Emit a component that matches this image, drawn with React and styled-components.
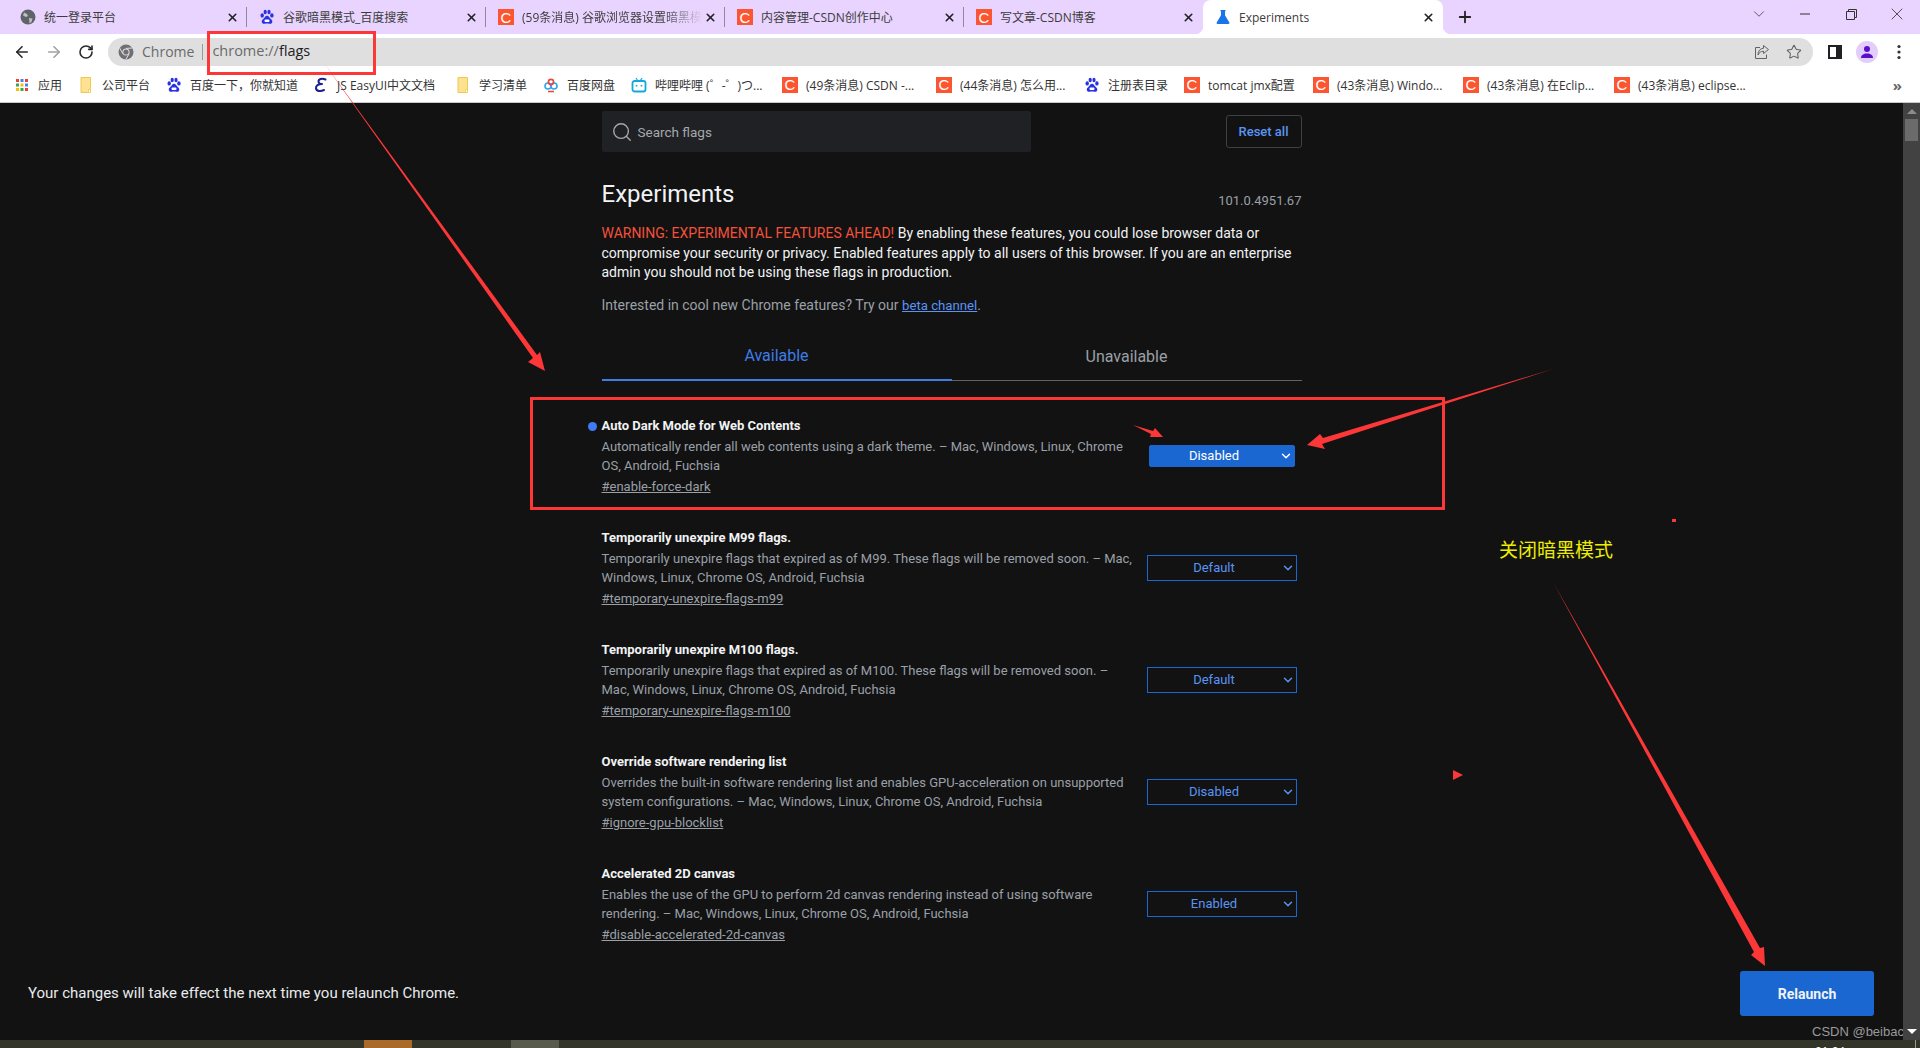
import React from "react";
import styled, { createGlobalStyle } from "styled-components";
import { ArrowLeft, ArrowRight, ChevronDown, Plus, RotateCw, Search, Star, X } from "lucide-react";

const uiFont = `"Open Sans", "Noto Sans CJK SC", sans-serif`;
const pageFont = `Roboto, "Liberation Sans", sans-serif`;

const GlobalStyle = createGlobalStyle`
  html, body {
    margin: 0;
    height: 100%;
    overflow: hidden;
    background: #121213;
  }
  * {
    box-sizing: border-box;
  }
`;

const Screen = styled.div`
  position: relative;
  width: 1920px;
  height: 1048px;
  display: flex;
  flex-direction: column;
  overflow: hidden;
  font-family: ${uiFont};
`;

const TabStrip = styled.div`
  height: 34px;
  flex: none;
  display: flex;
  background: #e8d4fe;
`;

const Tab = styled.div`
  position: relative;
  width: 239px;
  flex: none;
  display: flex;
  align-items: center;
  padding: 0 7px 0 11px;
  font-size: 12px;
  color: #3c3c3c;
  &::after {
    content: "";
    position: absolute;
    right: 0;
    top: 7px;
    bottom: 7px;
    width: 1px;
    background: ${(props) => (props.$divider ? "#8f8a96" : "transparent")};
  }
`;

const FirstTab = styled(Tab)`
  width: 247px;
  padding-left: 19px;
`;

const ActiveTab = styled(Tab)`
  width: 240px;
  background: #fff;
  border-radius: 8px 8px 0 0;
  &::before,
  &::after {
    content: "";
    position: absolute;
    top: auto;
    bottom: 0;
    width: 8px;
    height: 8px;
  }
  &::before {
    left: -8px;
    background: radial-gradient(circle at 0 0, transparent 8px, #fff 8.5px);
  }
  &::after {
    right: -8px;
    background: radial-gradient(circle at 100% 0, transparent 8px, #fff 8.5px);
  }
`;

const TabIcon = styled.span`
  width: 16px;
  height: 16px;
  flex: none;
  display: flex;
  margin-right: 8px;
  margin-left: 1px;
`;

const TabTitle = styled.span`
  flex: 1;
  min-width: 0;
  white-space: nowrap;
  overflow: hidden;
  ${(props) =>
    props.$fade &&
    `mask-image: linear-gradient(to right, #000 78%, transparent 100%);`}
`;

const TabClose = styled.span`
  width: 16px;
  display: flex;
  justify-content: center;
  color: #222;
`;

const NewTab = styled.div`
  width: 44px;
  display: flex;
  align-items: center;
  justify-content: center;
  color: #222;
`;

const WindowControls = styled.div`
  margin-left: auto;
  display: flex;
`;

const WindowButton = styled.div`
  width: 46px;
  height: 28px;
  display: flex;
  align-items: center;
  justify-content: center;
  color: #333;
`;

const Toolbar = styled.div`
  height: 34px;
  flex: none;
  display: flex;
  align-items: center;
  padding: 2px 5px 0 6px;
  background: #fff;
`;

const NavButton = styled.div`
  width: 32px;
  height: 28px;
  flex: none;
  display: flex;
  align-items: center;
  justify-content: center;
  color: ${(props) => (props.$dim ? "#a2a2a2" : "#2a2a2a")};
`;

const Omnibox = styled.div`
  flex: 1;
  height: 28px;
  margin: 0 6px;
  padding: 0 3px 0 10px;
  border-radius: 14px;
  background: #dfdfdf;
  display: flex;
  align-items: center;
  font-size: 14px;
  color: #6a6a6a;
`;

const OriginLabel = styled.span`
  margin-left: 8px;
  padding-right: 8px;
  border-right: 1px solid #9a9a9a;
  line-height: 16px;
`;

const Url = styled.span`
  margin-left: 9px;
  font-size: 14.5px;
  line-height: 18px;
  margin-top: -2px;
  b {
    font-weight: 400;
    color: #202124;
  }
`;

const OmniActions = styled.div`
  margin-left: auto;
  display: flex;
  color: #5f6368;
`;

const OmniAction = styled.div`
  width: 32px;
  display: flex;
  justify-content: center;
`;

const Avatar = styled.div`
  width: 22px;
  height: 22px;
  border-radius: 50%;
  background: #e2cdfb;
  display: flex;
  align-items: center;
  justify-content: center;
`;

const BookmarkBar = styled.div`
  height: 35px;
  flex: none;
  display: flex;
  align-items: center;
  padding: 0 0 1px 14px;
  background: #fff;
  border-bottom: 1px solid #c9c9c9;
  font-size: 12px;
  color: #333;
`;

const Bookmark = styled.div`
  width: ${(props) => props.$w}px;
  flex: none;
  display: flex;
  align-items: center;
  gap: 8px;
  white-space: nowrap;
`;

const BookmarkIcon = styled.span`
  width: 16px;
  height: 16px;
  flex: none;
  display: flex;
`;

const MoreBookmarks = styled.span`
  margin-left: auto;
  margin-right: 18px;
  font-size: 15px;
  font-weight: 700;
  color: #666;
`;

const CsdnMark = styled.span`
  width: 16px;
  height: 16px;
  flex: none;
  display: flex;
  align-items: center;
  justify-content: center;
  background: #fc5531;
  color: #fff;
  font-family: "Liberation Sans", sans-serif;
  font-size: 15px;
`;

const Page = styled.div`
  flex: 1;
  min-height: 0;
  display: flex;
  background: #121213;
  font-family: ${pageFont};
`;

const PageBody = styled.div`
  flex: 1;
  min-width: 0;
  display: flex;
  flex-direction: column;
`;

const Scrollbar = styled.div`
  width: 17px;
  flex: none;
  background: #424242;
  display: flex;
  flex-direction: column;
  align-items: center;
  justify-content: space-between;
  padding: 6px 0;
  position: relative;
  z-index: 3;
`;

const ScrollTop = styled.div`
  display: flex;
  flex-direction: column;
  align-items: center;
  gap: 5px;
`;

const ScrollThumb = styled.div`
  width: 13px;
  height: 22px;
  background: #6b6b6b;
`;

const Arrow = styled.div`
  width: 0;
  height: 0;
  border-left: 5px solid transparent;
  border-right: 5px solid transparent;
  ${(props) =>
    props.$down
      ? `border-top: 5px solid #fff;`
      : `border-bottom: 5px solid #8c8c8c;`}
`;

const Content = styled.main`
  width: 700px;
  margin: 0 auto;
  flex: 1;
  min-height: 0;
`;

const SearchRow = styled.div`
  height: 57px;
  padding-top: 8px;
  display: flex;
  align-items: flex-start;
  justify-content: space-between;
`;

const SearchBox = styled.div`
  width: 429px;
  height: 41px;
  padding-left: 9px;
  display: flex;
  align-items: center;
  gap: 5px;
  border-radius: 2px;
  background: #202124;
  color: #a5a8ac;
  font-size: 13.5px;
`;

const ResetButton = styled.button`
  width: 76px;
  height: 33px;
  margin-top: 4px;
  border: 1px solid #3c4043;
  border-radius: 3px;
  background: transparent;
  color: #5a94f4;
  font: 500 13px ${pageFont};
`;

const TitleRow = styled.div`
  display: flex;
  justify-content: space-between;
  align-items: flex-end;
  height: 30px;
  margin-top: 19px;
`;

const Title = styled.h1`
  margin: 0;
  font-size: 24px;
  line-height: 30px;
  font-weight: 400;
  color: #f1f3f4;
`;

const Version = styled.span`
  font-size: 13px;
  line-height: 17px;
  color: #9aa0a6;
`;

const Warning = styled.p`
  margin: 15px 0 0;
  font-size: 14px;
  line-height: 19.5px;
  color: #f1f3f4;
  white-space: nowrap;
`;

const WarningLead = styled.span`
  color: #f2513a;
`;

const Interested = styled.p`
  margin: 12px 0 0;
  font-size: 14px;
  line-height: 20px;
  color: #9aa0a6;
  a {
    font-size: 13.2px;
    color: #5a94f4;
  }
`;

const Tabs = styled.div`
  display: flex;
  margin-top: 24px;
`;

const TabButton = styled.div`
  flex: 1;
  height: 41px;
  text-align: center;
  font-size: 16px;
  line-height: ${(props) => (props.$active ? "31px" : "33px")};
  border-bottom: ${(props) => (props.$active ? "2px solid #3f7ce6" : "1px solid #5f6368")};
  color: ${(props) => (props.$active ? "#3f7ce6" : "#9aa0a6")};
`;

const FlagList = styled.div`
  margin-top: 35px;
`;

const FlagRow = styled.div`
  position: relative;
  height: 112px;
  display: flex;
  justify-content: space-between;
`;

const FlagDot = styled.span`
  position: absolute;
  left: -14px;
  top: 6px;
  width: 9px;
  height: 9px;
  border-radius: 50%;
  background: #3d7cf2;
`;

const FlagText = styled.div`
  white-space: nowrap;
`;

const FlagName = styled.div`
  font-size: 13px;
  line-height: 20px;
  font-weight: 700;
  color: #f1f3f4;
`;

const FlagDescription = styled.div`
  margin-top: 1.5px;
  font-size: 13px;
  line-height: 19px;
  color: #9aa0a6;
`;

const FlagLink = styled.a`
  display: block;
  margin-top: 1.5px;
  font-size: 13px;
  line-height: 20px;
  color: #9aa0a6;
  text-decoration: underline;
`;

const SelectSlot = styled.div`
  width: 150px;
  height: 26px;
  margin: 27px 5px 0 0;
  display: flex;
  align-items: center;
  justify-content: center;
`;

const FlagSelect = styled.div`
  position: relative;
  width: ${(props) => (props.$on ? "146px" : "150px")};
  height: ${(props) => (props.$on ? "22px" : "26px")};
  padding-right: 15px;
  display: flex;
  align-items: center;
  justify-content: center;
  border: 1px solid #1a67d2;
  border-radius: ${(props) => (props.$on ? "2px" : "0")};
  background: ${(props) => (props.$on ? "#1a67d2" : "transparent")};
  color: ${(props) => (props.$on ? "#fff" : "#5a94f4")};
  font-size: 13px;
  svg {
    position: absolute;
    right: 1px;
    top: 50%;
    margin-top: -7px;
  }
`;

const RelaunchBar = styled.div`
  height: 90px;
  flex: none;
  display: flex;
  align-items: flex-start;
  justify-content: space-between;
  padding: 21px 29px 0 28px;
`;

const RelaunchText = styled.span`
  margin-top: 12px;
  font-size: 15px;
  line-height: 20px;
  color: #e8eaed;
`;

const RelaunchButton = styled.button`
  width: 134px;
  height: 45px;
  border: 0;
  border-radius: 3px;
  background: #1a67d2;
  color: #f1f3f4;
  font: 700 14px ${pageFont};
`;

const Taskbar = styled.div`
  height: 8px;
  flex: none;
  display: flex;
  background: #33342a;
  color: #fff;
  font: 12px "Liberation Sans", sans-serif;
  overflow: hidden;
`;

const TaskItem = styled.div`
  width: 48px;
  margin-left: ${(props) => props.$left}px;
  background: ${(props) => props.$color};
`;

const Clock = styled.span`
  margin-left: 1256px;
  margin-top: 5px;
  line-height: 14px;
`;

const TaskEdge = styled.span`
  width: 1px;
  margin-left: 70px;
  background: #9a9a8a;
`;

const Watermark = styled.span`
  position: absolute;
  left: 1812px;
  top: 1024px;
  z-index: 2;
  font: 13px/16px "Liberation Sans", sans-serif;
  color: #9a9a9a;
`;

const Note = styled.span`
  position: absolute;
  left: 1499px;
  top: 537px;
  z-index: 4;
  font: 400 19px/24px "Noto Sans CJK SC", sans-serif;
  color: #eeee00;
`;

const Annotations = styled.svg`
  position: absolute;
  left: 0;
  top: 0;
  z-index: 4;
  pointer-events: none;
`;

const BaiduIcon = () => (
  <svg width="16" height="16" viewBox="0 0 16 16" fill="#2932e1">
    <ellipse cx="3.2" cy="6.4" rx="1.7" ry="2.2" />
    <ellipse cx="6.2" cy="3" rx="1.6" ry="2.2" />
    <ellipse cx="10" cy="3" rx="1.6" ry="2.2" />
    <ellipse cx="12.9" cy="6.4" rx="1.7" ry="2.2" />
    <path d="M8 6.8c-1.8 0-2.4 2-3.7 3.1C3 11 2.6 11.800 2.800 13c.3 1.700 1.900 2 3 1.700.8-.2 1.500-.3 2.200-.3s1.500.1 2.300.3c1.100.3 2.700 0 3-1.700.2-1.200-.3-2-1.500-3.100C10.500 8.800 9.800 6.800 8 6.800z" />
    <rect x="5.500" y="10.500" width="5" height="2.600" rx="1" fill="#fff" />
  </svg>
);

const FolderIcon = () => (
  <svg width="16" height="16" viewBox="0 0 16 16">
    <path d="M3 .5h9.500v15H3z" fill="#fde293" stroke="#f0c84a" />
    <rect x="10.500" y="12.500" width="2" height="3" fill="#fff" stroke="#f0c84a" strokeWidth=".7" />
  </svg>
);

const AppsIcon = () => (
  <svg width="16" height="16" viewBox="0 0 16 16">
    {["#ea4335", "#4285f4", "#ea4335", "#34a853", "#fbbc04", "#4285f4", "#fbbc04", "#34a853", "#ea4335"].map((c, i) => (
      <rect key={i} x={2 + (i % 3) * 4.500} y={2 + Math.floor(i / 3) * 4.500} width="3" height="3" fill={c} />
    ))}
  </svg>
);

const EasyIcon = () => (
  <svg width="16" height="16" viewBox="0 0 16 16" fill="none" stroke="#1a1f8f" strokeWidth="2" strokeLinecap="round">
    <path d="M12.500 2.500C9 1 5.500 2 5.500 4.500c0 1.500 1.500 2.500 3.500 2.500M9 7C5.500 7 2.500 8.500 3 11.500 3.500 14.500 8 14.500 11 13" />
  </svg>
);

const CloudIcon = () => (
  <svg width="16" height="16" viewBox="0 0 16 16" fill="none" strokeWidth="1.600">
    <circle cx="5" cy="9" r="3" stroke="#2ea7e8" />
    <circle cx="11" cy="9" r="3" stroke="#2ea7e8" />
    <circle cx="8" cy="5" r="2.600" stroke="#e8493f" />
    <path d="M5 14.500h6" stroke="#e8493f" />
  </svg>
);

const BiliIcon = () => (
  <svg width="16" height="16" viewBox="0 0 16 16" fill="none" stroke="#12a9dd" strokeWidth="1.800">
    <rect x="1.500" y="4" width="13" height="10.500" rx="2" />
    <path d="M5 1l2 3M11 1L9 4" strokeWidth="1.200" />
    <path d="M5.500 8v1.500M10.500 8v1.500" strokeWidth="1.600" />
  </svg>
);

const GlobeIcon = () => (
  <svg width="16" height="16" viewBox="0 0 16 16">
    <circle cx="8" cy="8" r="7.500" fill="#5f6368" />
    <path d="M4 3.500l3 1.500 1 2-2 1-3-1.500zM9 9l3.500.5-1 3.500-2 1.500z" fill="#bdbfc2" />
  </svg>
);

const FlaskIcon = () => (
  <svg width="16" height="16" viewBox="0 0 16 16">
    <path d="M5.500 1h5v1.200H10v4l4.300 7.300c.4.700-.1 1.500-.9 1.500H2.600c-.8 0-1.300-.8-.9-1.500L6 6.200v-4h-.5z" fill="#1a73e8" />
  </svg>
);

const ChromeIcon = () => (
  <svg width="16" height="16" viewBox="0 0 16 16">
    <circle cx="8" cy="8" r="7.500" fill="#6e7073" />
    <path d="M8 4.400L14.400 4M4.900 9.800L1.800 4.200M11.100 9.800L7.900 15.300" stroke="#dfdfdf" strokeWidth="1" />
    <circle cx="8" cy="8" r="3.600" fill="#dfdfdf" />
    <circle cx="8" cy="8" r="2.600" fill="#6e7073" />
  </svg>
);

const ShareIcon = () => (
  <svg width="16" height="16" viewBox="0 0 16 16" fill="none" stroke="currentColor" strokeWidth="1">
    <path d="M6 3.500H1.500v11h11v-4" />
    <path d="M9.500 1.500l5 4-5 4V7.200C7 7.200 5 8.500 4 11c0-4 2-6.500 5.500-6.800z" />
  </svg>
);

const SidebarIcon = () => (
  <svg width="14" height="14" viewBox="0 0 14 14">
    <path d="M0 0h14v14H0z" fill="#202124" />
    <path d="M2 2h6v10H2z" fill="#fff" />
  </svg>
);

const MenuIcon = () => (
  <svg width="16" height="16" viewBox="0 0 16 16" fill="#333">
    <circle cx="8" cy="2.500" r="1.600" />
    <circle cx="8" cy="8" r="1.600" />
    <circle cx="8" cy="13.500" r="1.600" />
  </svg>
);

const tabs = [
  { title: "谷歌暗黑模式_百度搜索", icon: <BaiduIcon />, divider: true },
  { title: "(59条消息) 谷歌浏览器设置暗黑模式", icon: <CsdnMark>C</CsdnMark>, divider: true, fade: true },
  { title: "内容管理-CSDN创作中心", icon: <CsdnMark>C</CsdnMark>, divider: true },
  { title: "写文章-CSDN博客", icon: <CsdnMark>C</CsdnMark> },
];

const bookmarks = [
  { w: 64, label: "应用", icon: <AppsIcon /> },
  { w: 88, label: "公司平台", icon: <FolderIcon /> },
  { w: 147, label: "百度一下，你就知道", icon: <BaiduIcon /> },
  { w: 142, label: "JS EasyUI中文文档", icon: <EasyIcon /> },
  { w: 88, label: "学习清单", icon: <FolderIcon /> },
  { w: 88, label: "百度网盘", icon: <CloudIcon /> },
  { w: 151, label: "哔哩哔哩 (゜-゜)つ...", icon: <BiliIcon /> },
  { w: 154, label: "(49条消息) CSDN -...", csdn: true },
  { w: 148, label: "(44条消息) 怎么用...", csdn: true },
  { w: 100, label: "注册表目录", icon: <BaiduIcon /> },
  { w: 129, label: "tomcat jmx配置", csdn: true },
  { w: 150, label: "(43条消息) Windo...", csdn: true },
  { w: 151, label: "(43条消息) 在Eclip...", csdn: true },
  { w: 120, label: "(43条消息) eclipse...", csdn: true },
];

const flags = [
  {
    name: "Auto Dark Mode for Web Contents",
    lines: ["Automatically render all web contents using a dark theme. – Mac, Windows, Linux, Chrome", "OS, Android, Fuchsia"],
    link: "#enable-force-dark",
    value: "Disabled",
    on: true,
  },
  {
    name: "Temporarily unexpire M99 flags.",
    lines: ["Temporarily unexpire flags that expired as of M99. These flags will be removed soon. – Mac,", "Windows, Linux, Chrome OS, Android, Fuchsia"],
    link: "#temporary-unexpire-flags-m99",
    value: "Default",
  },
  {
    name: "Temporarily unexpire M100 flags.",
    lines: ["Temporarily unexpire flags that expired as of M100. These flags will be removed soon. –", "Mac, Windows, Linux, Chrome OS, Android, Fuchsia"],
    link: "#temporary-unexpire-flags-m100",
    value: "Default",
  },
  {
    name: "Override software rendering list",
    lines: ["Overrides the built-in software rendering list and enables GPU-acceleration on unsupported", "system configurations. – Mac, Windows, Linux, Chrome OS, Android, Fuchsia"],
    link: "#ignore-gpu-blocklist",
    value: "Disabled",
  },
  {
    name: "Accelerated 2D canvas",
    lines: ["Enables the use of the GPU to perform 2d canvas rendering instead of using software", "rendering. – Mac, Windows, Linux, Chrome OS, Android, Fuchsia"],
    link: "#disable-accelerated-2d-canvas",
    value: "Enabled",
  },
];

const Flag = ({ flag }) => (
  <FlagRow>
    {flag.on && <FlagDot />}
    <FlagText>
      <FlagName>{flag.name}</FlagName>
      <FlagDescription>
        {flag.lines[0]}
        <br />
        {flag.lines[1]}
      </FlagDescription>
      <FlagLink href={flag.link}>{flag.link}</FlagLink>
    </FlagText>
    <SelectSlot>
      <FlagSelect $on={flag.on}>
        {flag.value}
        <ChevronDown size={14} strokeWidth={2.5} />
      </FlagSelect>
    </SelectSlot>
  </FlagRow>
);

export default function App() {
  return (
    <Screen>
      <GlobalStyle />
      <TabStrip>
        <FirstTab $divider>
          <TabIcon><GlobeIcon /></TabIcon>
          <TabTitle>统一登录平台</TabTitle>
          <TabClose><X size={13} strokeWidth={3} /></TabClose>
        </FirstTab>
        {tabs.map((tab) => (
          <Tab key={tab.title} $divider={tab.divider}>
            <TabIcon>{tab.icon}</TabIcon>
            <TabTitle $fade={tab.fade}>{tab.title}</TabTitle>
            <TabClose><X size={13} strokeWidth={3} /></TabClose>
          </Tab>
        ))}
        <ActiveTab>
          <TabIcon><FlaskIcon /></TabIcon>
          <TabTitle>Experiments</TabTitle>
          <TabClose><X size={13} strokeWidth={3} /></TabClose>
        </ActiveTab>
        <NewTab><Plus size={18} strokeWidth={2.4} /></NewTab>
        <WindowControls>
          <WindowButton><ChevronDown size={18} strokeWidth={1} /></WindowButton>
          <WindowButton>
            <svg width="10" height="10" viewBox="0 0 10 10"><path d="M0 5h10" stroke="#333" /></svg>
          </WindowButton>
          <WindowButton>
            <svg width="11" height="11" viewBox="0 0 11 11" fill="none" stroke="#333">
              <path d="M.5 2.500h8v8h-8zM2.500 2.500v-2h8v8h-2" />
            </svg>
          </WindowButton>
          <WindowButton><X size={20} strokeWidth={1} /></WindowButton>
        </WindowControls>
      </TabStrip>

      <Toolbar>
        <NavButton><ArrowLeft size={18} strokeWidth={2.2} /></NavButton>
        <NavButton $dim><ArrowRight size={18} strokeWidth={2.2} /></NavButton>
        <NavButton><RotateCw size={16} strokeWidth={2.4} /></NavButton>
        <Omnibox>
          <ChromeIcon />
          <OriginLabel>Chrome</OriginLabel>
          <Url>chrome://<b>flags</b></Url>
          <OmniActions>
            <OmniAction><ShareIcon /></OmniAction>
            <OmniAction><Star size={16} strokeWidth={1.6} /></OmniAction>
          </OmniActions>
        </Omnibox>
        <NavButton><SidebarIcon /></NavButton>
        <NavButton>
          <Avatar>
            <svg width="14" height="14" viewBox="0 0 14 14" fill="#5b0fc8">
              <circle cx="7" cy="4" r="3" />
              <path d="M1 13c0-3 2.500-4.500 6-4.500s6 1.500 6 4.500z" />
            </svg>
          </Avatar>
        </NavButton>
        <NavButton><MenuIcon /></NavButton>
      </Toolbar>

      <BookmarkBar>
        {bookmarks.map((item) => (
          <Bookmark key={item.label} $w={item.w}>
            {item.csdn ? <CsdnMark>C</CsdnMark> : <BookmarkIcon>{item.icon}</BookmarkIcon>}
            {item.label}
          </Bookmark>
        ))}
        <MoreBookmarks>»</MoreBookmarks>
      </BookmarkBar>

      <Page>
        <PageBody>
          <Content>
            <SearchRow>
              <SearchBox>
                <Search size={22} strokeWidth={1.5} />
                Search flags
              </SearchBox>
              <ResetButton>Reset all</ResetButton>
            </SearchRow>
            <TitleRow>
              <Title>Experiments</Title>
              <Version>101.0.4951.67</Version>
            </TitleRow>
            <Warning>
              <WarningLead>WARNING: EXPERIMENTAL FEATURES AHEAD!</WarningLead> By enabling these features, you could lose browser data or
              <br />
              compromise your security or privacy. Enabled features apply to all users of this browser. If you are an enterprise
              <br />
              admin you should not be using these flags in production.
            </Warning>
            <Interested>
              Interested in cool new Chrome features? Try our <a href="#beta">beta channel</a>.
            </Interested>
            <Tabs>
              <TabButton $active>Available</TabButton>
              <TabButton>Unavailable</TabButton>
            </Tabs>
            <FlagList>
              {flags.map((flag) => (
                <Flag key={flag.link} flag={flag} />
              ))}
            </FlagList>
          </Content>
          <RelaunchBar>
            <RelaunchText>Your changes will take effect the next time you relaunch Chrome.</RelaunchText>
            <RelaunchButton>Relaunch</RelaunchButton>
          </RelaunchBar>
        </PageBody>
        <Scrollbar>
          <ScrollTop>
            <Arrow />
            <ScrollThumb />
          </ScrollTop>
          <Arrow $down />
        </Scrollbar>
      </Page>

      <Taskbar>
        <TaskItem $left={364} $color="#a96a2a" />
        <TaskItem $left={99} $color="#575a4c" />
        <Clock>21:24</Clock>
        <TaskEdge />
      </Taskbar>

      <Watermark>CSDN @beiback</Watermark>
      <Note>关闭暗黑模式</Note>

      <Annotations width="1920" height="1048" viewBox="0 0 1920 1048">
        <g fill="none" stroke="#fb3737" strokeWidth="3">
          <rect x="208.500" y="32.500" width="166" height="41" />
          <rect x="531.500" y="398.500" width="912" height="110" />
        </g>
        <g fill="#fb3737">
          <polygon points="324,63 537,355 540,352 545,371 528,362 533,358" />
          <polygon points="1133,425 1153,431 1155,428 1163,437 1150,437 1151,434" />
          <polygon points="1553,369 1323,438 1320,434 1307,445 1325,449 1322,444" />
          <polygon points="1553,582 1760,948 1764,947 1765,966 1751,955 1754,952" />
          <polygon points="1453,770 1463,775 1453,780" />
          <rect x="1672" y="519" width="4" height="3" />
        </g>
      </Annotations>
    </Screen>
  );
}
